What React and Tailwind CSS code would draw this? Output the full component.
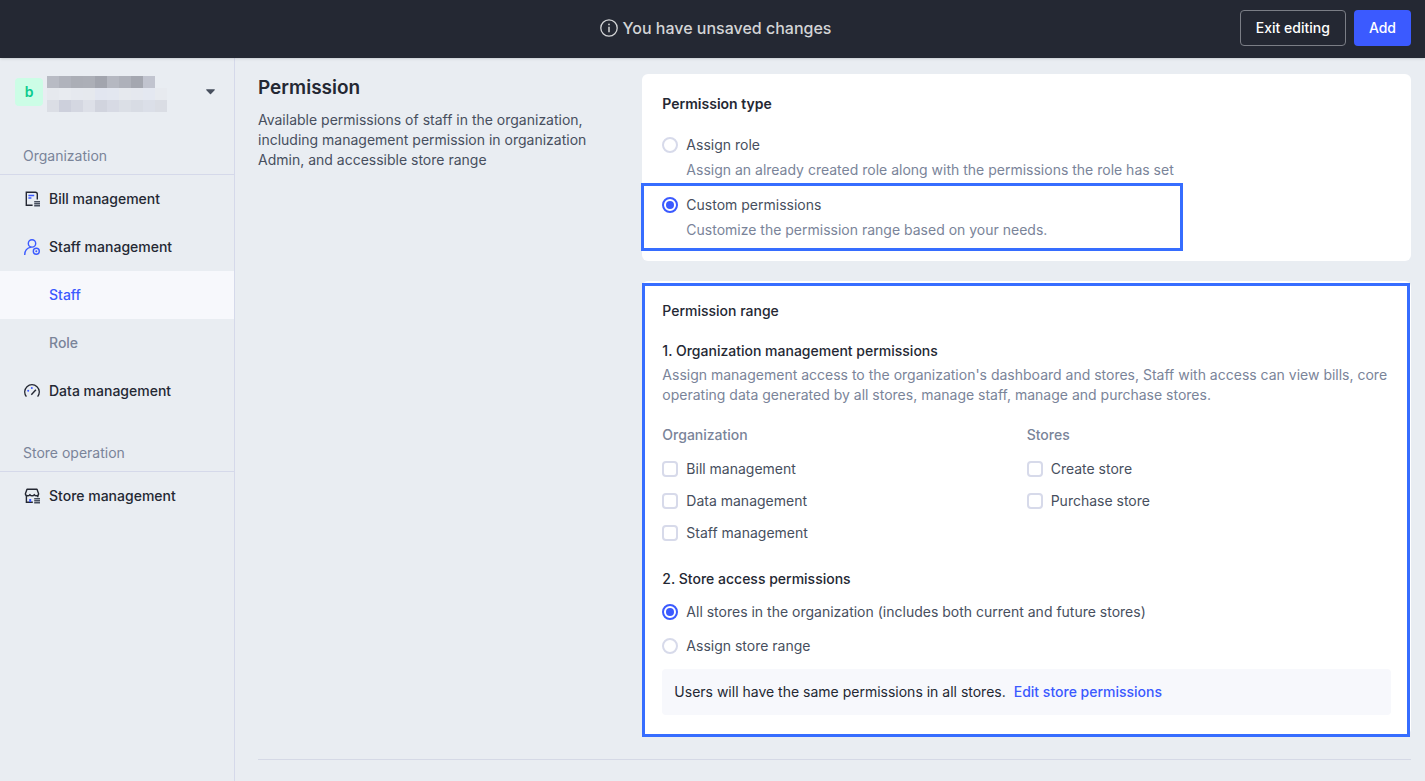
import { useState } from "react";

const BillIcon = () => (
  <svg width="16" height="16" viewBox="0 0 16 16" fill="none" aria-hidden="true">
    <path d="M8.600 14.300H2.300V1.200h9c1.200 0 2 .8 2 2v5.300" stroke="#242833" strokeWidth="1.400" />
    <path d="M4.400 4.500h5.800M4.400 7h3" stroke="#3b5aff" strokeWidth="1.300" />
    <path d="M10.200 10.700H16M10.200 12.700H16M10.200 14.700H16" stroke="#474f5e" strokeWidth="1.500" />
  </svg>
);

const StaffIcon = () => (
  <svg width="16" height="16" viewBox="0 0 16 16" fill="none" stroke="#3b5aff" strokeWidth="1.400" aria-hidden="true">
    <circle cx="8" cy="4.400" r="3.700" />
    <path d="M.7 16c0-4.200 2.600-7.300 6.600-7.900" />
    <circle cx="12.300" cy="12.300" r="3" />
    <circle cx="12.300" cy="12.300" r="1" fill="#3b5aff" stroke="none" />
  </svg>
);

const DataIcon = () => (
  <svg width="16" height="16" viewBox="0 0 16 16" fill="none" aria-hidden="true">
    <path d="M2.400 13.700A7.300 7.300 0 1 1 13.600 13.700" stroke="#242833" strokeWidth="1.300" />
    <path d="M7.300 11.700 11.900 6.700" stroke="#242833" strokeWidth="1.400" />
    <circle cx="7.800" cy="4.900" r="1" fill="#3b5aff" />
    <circle cx="4.200" cy="7.800" r="1" fill="#3b5aff" />
  </svg>
);

const StoreIcon = () => (
  <svg width="16" height="16" viewBox="0 0 16 16" fill="none" aria-hidden="true">
    <path
      d="M3 1.300h10l1.600 4.400c0 1.300-.9 2.100-2.100 2.100-1 0-1.800-.5-2.200-1.200-.4.700-1.200 1.200-2.200 1.200s-1.800-.5-2.200-1.200c-.4.700-1.300 1.200-2.300 1.200-1.300 0-2.200-.8-2.200-2.100L3 1.300Z"
      stroke="#242833"
      strokeWidth="1.400"
      strokeLinejoin="round"
    />
    <path d="M2.400 7.700v6.600h6.400M13.800 7.500v1.800" stroke="#242833" strokeWidth="1.400" />
    <path d="M6.200 11v3" stroke="#3b5aff" strokeWidth="2" />
    <path d="M10.200 10.700H16M10.200 12.700H16M10.200 14.700H16" stroke="#474f5e" strokeWidth="1.500" />
  </svg>
);

const InfoIcon = () => (
  <svg width="18" height="18" viewBox="0 0 18 18" fill="none" stroke="#d3d4d6" aria-hidden="true">
    <circle cx="9" cy="9" r="8.200" strokeWidth="1.300" />
    <path d="M9 7.800v5.400" strokeWidth="1.500" />
    <circle cx="9" cy="5.400" r=".9" fill="#d3d4d6" stroke="none" />
  </svg>
);

const nameTiles = [
  ["#b8bbc4", "#b0b3bc", "#abaeb6", "#acafb7", "#a2a5ae", "#b5b8c1", "#aeb1ba", "#a4a7b0", "#c1c4cf"],
  ["#e6e9ee", "#e8ebf0", "#e6e9ef", "#e6e9ee", "#e2e6f0", "#e3e7f0", "#e6e9ee", "#e5e8ef", "#e4e8f1", "#e7eaef"],
  ["#dbdee5", "#cdd0dc", "#d4d7e1", "#dde0e8", "#d1d4de", "#d7dae4", "#dbdfe6", "#d8dce4", "#dbdfe8", "#dadde4"],
];

const HiddenName = () => (
  <svg width="132" height="36" viewBox="0 0 132 36" shapeRendering="crispEdges" aria-hidden="true">
    {nameTiles.map((row, y) =>
      row.map((fill, x) => <rect key={`${x}-${y}`} x={x * 12} y={y * 12} width="12" height="12" fill={fill} />)
    )}
  </svg>
);

const NavItem = ({ icon, children }) => (
  <a href="#" className="flex h-12 items-center gap-[9px] pl-6 font-medium text-[#242833]">
    {icon}
    {children}
  </a>
);

const SectionLabel = ({ children }) => (
  <h2 className="border-b border-[#d5d9ea] pb-2 pl-[23px] text-[#7a8499]">{children}</h2>
);

const Radio = ({ label, ...props }) => (
  <label className="flex w-fit items-center gap-2 text-[#474f5e]">
    <input
      type="radio"
      className="h-4 w-4 shrink-0 appearance-none rounded-full border-2 border-[#d7daea] bg-white p-0.5 before:block before:h-2 before:w-2 before:rounded-full checked:border-[#3b5aff] checked:before:bg-[#3b5aff]"
      {...props}
    />
    {label}
  </label>
);

const Checkbox = ({ label }) => (
  <label className="flex w-fit items-center gap-2 text-[#474f5e]">
    <input
      type="checkbox"
      className="h-4 w-4 shrink-0 appearance-none rounded border-2 border-[#d7daea] bg-white checked:border-[#3b5aff] checked:bg-[#3b5aff]"
    />
    {label}
  </label>
);

const CheckGroup = ({ title, items }) => (
  <fieldset>
    <legend className="font-medium text-[#7a8499]">{title}</legend>
    <div className="mt-3.5 flex flex-col gap-3">
      {items.map((item) => (
        <Checkbox key={item} label={item} />
      ))}
    </div>
  </fieldset>
);

const Header = () => (
  <header className="z-10 grid grid-cols-[1fr_auto_1fr] items-center bg-[#242833] pt-2.5 pr-3.5 pb-3 pl-5 shadow-sm">
    <div className="col-start-2 flex items-center gap-[5px] text-base font-medium text-[#d3d4d6]">
      <InfoIcon />
      You have unsaved changes
    </div>
    <div className="flex justify-end gap-2 font-medium text-white">
      <button className="h-9 rounded border border-[#7b7e86] px-[15px]">Exit editing</button>
      <button className="h-9 rounded bg-[#3b5aff] px-[15px]">Add</button>
    </div>
  </header>
);

const Sidebar = () => (
  <aside className="w-[235px] shrink-0 border-r border-[#d5d9ea] pt-4.5">
    <button className="flex w-full items-start pr-[19px] pl-[15px] text-left" aria-label="Switch organization">
      <span className="mt-0.5 flex h-7 w-7 items-center justify-center rounded-sm bg-[#ccfde6] font-semibold text-[#0acb8e]">
        b
      </span>
      <span className="ml-1">
        <HiddenName />
      </span>
      <svg className="mt-[13px] ml-auto" width="9" height="6" viewBox="0 0 9 6" aria-hidden="true">
        <path d="M.8.300h7.400c.6 0 .8.600.4 1L5 5c-.3.300-.7.300-1 0L.4 1.300C0 .9.200.300.8.300Z" fill="#474f5e" />
      </svg>
    </button>

    <nav className="pt-[34px]">
      <SectionLabel>Organization</SectionLabel>
      <NavItem icon={<BillIcon />}>Bill management</NavItem>
      <NavItem icon={<StaffIcon />}>Staff management</NavItem>
      <a href="#" className="flex h-12 items-center bg-[#f7f8fc] pl-[49px] font-medium text-[#3b5aff]">
        Staff
      </a>
      <a href="#" className="flex h-12 items-center pl-[49px] font-medium text-[#7a8499]">
        Role
      </a>
      <NavItem icon={<DataIcon />}>Data management</NavItem>
      <div className="pt-7">
        <SectionLabel>Store operation</SectionLabel>
      </div>
      <NavItem icon={<StoreIcon />}>Store management</NavItem>
    </nav>
  </aside>
);

const App = () => {
  const [type, setType] = useState("custom");
  const [range, setRange] = useState("all");

  return (
    <div className="flex min-h-screen flex-col bg-[#e9edf2] font-['Inter',sans-serif] text-sm text-[#242833]">
      <Header />
      <div className="flex flex-1">
        <Sidebar />

        <main className="min-w-0 flex-1 pt-4 pr-3.5 pl-[23px]">
          <div className="flex border-b border-[#d5d9e6] pb-6">
            <div className="w-1/3 shrink-0 pr-12">
              <h1 className="text-[19px] leading-7 font-semibold">Permission</h1>
              <p className="mt-2 text-[#474f5e]">
                Available permissions of staff in the organization, including management permission in organization
                Admin, and accessible store range
              </p>
            </div>

            <div className="flex min-w-0 flex-1 flex-col gap-5">
              {/* Permission type */}
              <section className="rounded-md bg-white px-5 pt-5 pb-[21px]">
                <h2 className="font-semibold">Permission type</h2>
                <div className="mt-[21px]">
                  <Radio
                    name="type"
                    label="Assign role"
                    checked={type === "role"}
                    onChange={() => setType("role")}
                  />
                  <p className="mt-[5px] pl-6 text-[#7a8499]">
                    Assign an already created role along with the permissions the role has set
                  </p>
                </div>
                <div className="relative mt-[15px]">
                  <Radio
                    name="type"
                    label="Custom permissions"
                    checked={type === "custom"}
                    onChange={() => setType("custom")}
                  />
                  <p className="mt-[5px] pl-6 text-[#7a8499]">Customize the permission range based on your needs.</p>
                  <div className="pointer-events-none absolute -top-3 -bottom-[11px] -left-[21px] w-[542px] border-3 border-[#366dff]" />
                </div>
              </section>

              {/* Permission range */}
              <section className="relative rounded-md bg-white p-5">
                <div className="pointer-events-none absolute top-0.5 right-px -bottom-0.5 left-0 border-3 border-[#366dff]" />
                <h2 className="font-medium">Permission range</h2>

                <h3 className="mt-5 font-medium">1. Organization management permissions</h3>
                <p className="mt-1 text-[#7a8499]">
                  Assign management access to the organization's dashboard and stores, Staff with access can view
                  bills, core operating data generated by all stores, manage staff, manage and purchase stores.
                </p>
                <div className="mt-5 grid grid-cols-2">
                  <CheckGroup title="Organization" items={["Bill management", "Data management", "Staff management"]} />
                  <CheckGroup title="Stores" items={["Create store", "Purchase store"]} />
                </div>

                <h3 className="mt-[26px] font-medium">2. Store access permissions</h3>
                <div className="mt-[13px] flex flex-col gap-3.5">
                  <Radio
                    name="range"
                    label="All stores in the organization (includes both current and future stores)"
                    checked={range === "all"}
                    onChange={() => setRange("all")}
                  />
                  <Radio
                    name="range"
                    label="Assign store range"
                    checked={range === "some"}
                    onChange={() => setRange("some")}
                  />
                </div>
                <div className="mt-[13px] rounded bg-[#f7f8fc] px-3 py-[13px]">
                  Users will have the same permissions in all stores.
                  <a href="#" className="ml-2 font-medium text-[#3b5aff]">
                    Edit store permissions
                  </a>
                </div>
              </section>
            </div>
          </div>
        </main>
      </div>
    </div>
  );
};

export default App;
